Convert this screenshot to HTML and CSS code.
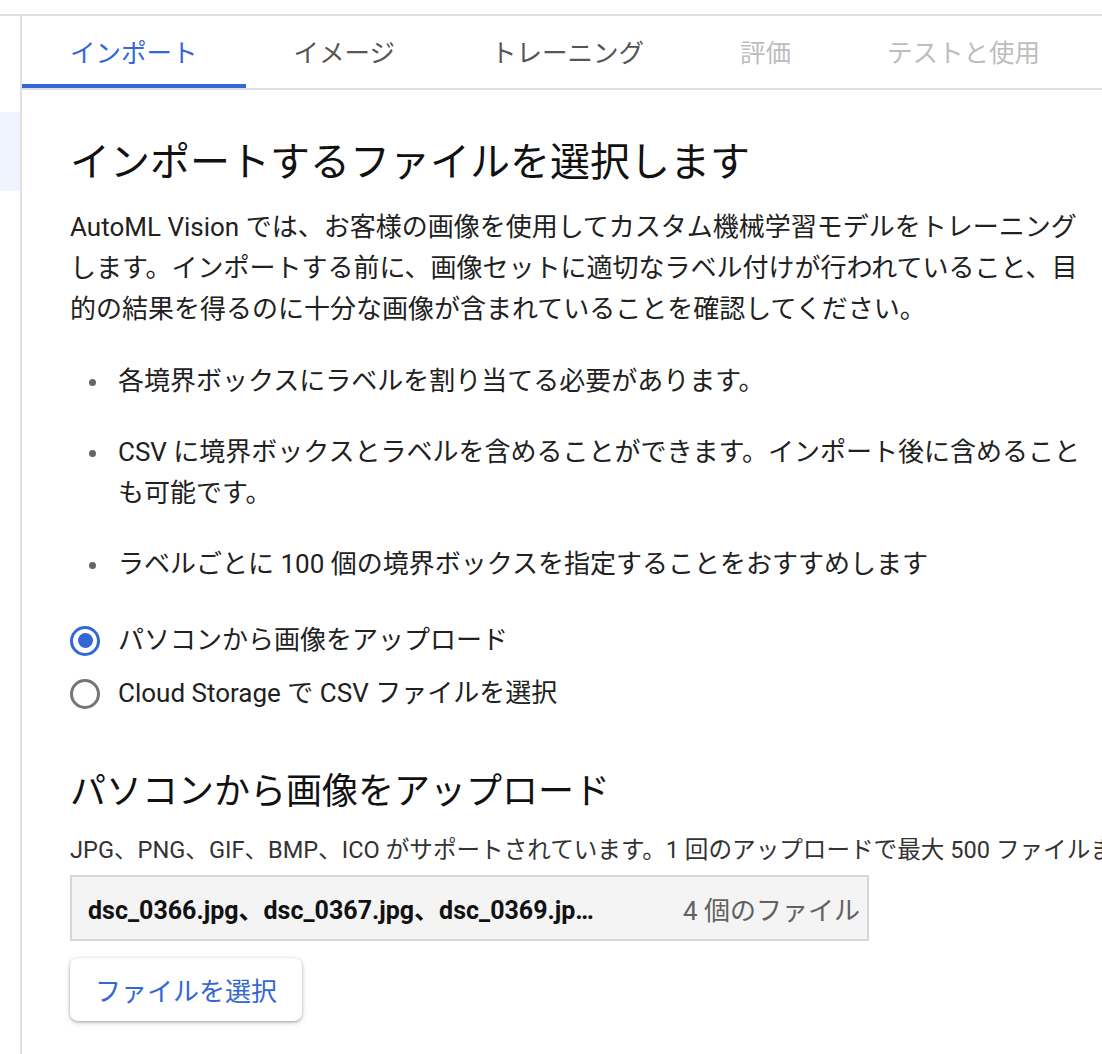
FILE: index.html
```html
<!DOCTYPE html>
<html lang="ja">
<head>
    <meta charset="UTF-8">
    <meta name="viewport" content="width=device-width, initial-scale=1.0">
    <title>AutoML Vision - インポート</title>
    <link rel="stylesheet" href="styles.css">
</head>
<body>
    <div class="topbar"></div>

    <div class="layout">
        <aside class="sidebar">
            <div class="side-item"></div>
        </aside>

        <main class="main">
            <nav class="tabs">
                <a class="tab active" href="#">インポート</a>
                <a class="tab" href="#">イメージ</a>
                <a class="tab" href="#">トレーニング</a>
                <a class="tab disabled" href="#">評価</a>
                <a class="tab disabled" href="#">テストと使用</a>
            </nav>

            <section class="content">
                <h1>インポートするファイルを選択します</h1>
                <p class="intro">AutoML Vision では、お客様の画像を使用してカスタム機械学習モデルをトレーニングします。インポートする前に、画像セットに適切なラベル付けが行われていること、目的の結果を得るのに十分な画像が含まれていることを確認してください。</p>

                <ul class="notes">
                    <li>各境界ボックスにラベルを割り当てる必要があります。</li>
                    <li>CSV に境界ボックスとラベルを含めることができます。インポート後に含めることも可能です。</li>
                    <li>ラベルごとに 100 個の境界ボックスを指定することをおすすめします</li>
                </ul>

                <!-- import source -->
                <div class="sources">
                    <label class="radio checked">
                        <span class="radio-mark"></span>
                        <span>パソコンから画像をアップロード</span>
                    </label>
                    <label class="radio">
                        <span class="radio-mark"></span>
                        <span>Cloud Storage で CSV ファイルを選択</span>
                    </label>
                </div>

                <h2>パソコンから画像をアップロード</h2>
                <p class="hint">JPG、PNG、GIF、BMP、ICO がサポートされています。1 回のアップロードで最大 500 ファイルまでアップロードできます。</p>

                <div class="file-box">
                    <span class="file-names">dsc_0366.jpg、dsc_0367.jpg、dsc_0369.jpg、dsc_0370.jpg</span>
                    <span class="file-count">4 個のファイル 選択済み</span>
                </div>

                <button class="choose-btn">ファイルを選択</button>
            </section>
        </main>
    </div>
</body>
</html>
```

FILE: styles.css
```css
* {
    margin: 0;
    padding: 0;
    box-sizing: border-box;
}

body {
    font-family: Roboto, "Noto Sans CJK JP", sans-serif;
    color: #212121;
    background-color: #ffffff;
    overflow: hidden;
}

.topbar {
    height: 16px;
    border-bottom: 2px solid #e0e0e0;
}

.layout {
    display: flex;
    min-height: calc(100vh - 16px);
}

.sidebar {
    width: 22px;
    flex-shrink: 0;
    border-right: 2px solid #e0e0e0;
    padding-top: 96px;
}

.side-item {
    height: 79px;
    background-color: #eef3fd;
}

.main {
    flex: 1;
    min-width: 0;
    overflow: hidden;
}

/* Tabs */
.tabs {
    display: flex;
    border-bottom: 2px solid #e0e0e0;
    white-space: nowrap;
}

.tab {
    display: flex;
    align-items: center;
    height: 72px;
    padding: 0 48px;
    border-bottom: 4px solid transparent;
    font-size: 25.5px;
    color: #555555;
    text-decoration: none;
}

.tab.active {
    color: #3367d6;
    border-bottom-color: #3367d6;
}

.tab.disabled {
    color: #bdbdbd;
}

/* Content */
.content {
    padding: 0 12px 0 48px;
}

.content h1 {
    margin-top: 49px;
    font-size: 40px;
    font-weight: 400;
    line-height: 48px;
    color: #111111;
}

.intro {
    width: 1020px;
    margin-top: 20px;
    font-size: 26px;
    line-height: 41px;
}

.notes {
    width: 1020px;
    margin-top: 31px;
    list-style: none;
}

.notes li {
    position: relative;
    padding-left: 48px;
    font-size: 26px;
    line-height: 41px;
}

.notes li + li {
    margin-top: 30px;
}

.notes li::before {
    content: "";
    position: absolute;
    left: 19px;
    top: 18px;
    width: 7px;
    height: 7px;
    border-radius: 50%;
    background-color: #666666;
}

/* Radio buttons */
.sources {
    display: flex;
    flex-direction: column;
    gap: 12px;
    margin-top: 35px;
}

.radio {
    display: flex;
    align-items: center;
    gap: 18px;
    font-size: 26px;
    line-height: 41px;
    cursor: pointer;
}

.radio-mark {
    width: 30px;
    height: 30px;
    border: 3px solid #757575;
    border-radius: 50%;
    display: flex;
    align-items: center;
    justify-content: center;
}

.radio.checked .radio-mark {
    border-color: #3367d6;
}

.radio.checked .radio-mark::after {
    content: "";
    width: 15px;
    height: 15px;
    border-radius: 50%;
    background-color: #3367d6;
}

.content h2 {
    margin-top: 56px;
    font-size: 36px;
    font-weight: 400;
    line-height: 44px;
    color: #111111;
}

.hint {
    margin-top: 21px;
    font-size: 23.6px;
    line-height: 30px;
    color: #333333;
    white-space: nowrap;
}

/* Selected files */
.file-box {
    display: flex;
    align-items: center;
    width: 799px;
    height: 66px;
    margin-top: 10px;
    padding-left: 16px;
    background-color: #f4f4f4;
    border: 2px solid #d6d6d6;
    overflow: hidden;
    white-space: nowrap;
}

.file-names {
    flex-shrink: 0;
    width: 515px;
    margin-right: 80px;
    overflow: hidden;
    text-overflow: ellipsis;
    font-size: 25px;
    font-weight: 700;
    color: #111111;
}

.file-count {
    flex-shrink: 0;
    font-size: 26px;
    color: #616161;
}

.choose-btn {
    margin-top: 17px;
    height: 63px;
    padding: 0 25px;
    background-color: #ffffff;
    border: none;
    border-radius: 8px;
    box-shadow: 0 1px 3px rgba(0, 0, 0, 0.3), 0 2px 6px rgba(0, 0, 0, 0.12);
    font-family: inherit;
    font-size: 26px;
    color: #3367d6;
    cursor: pointer;
}
```
